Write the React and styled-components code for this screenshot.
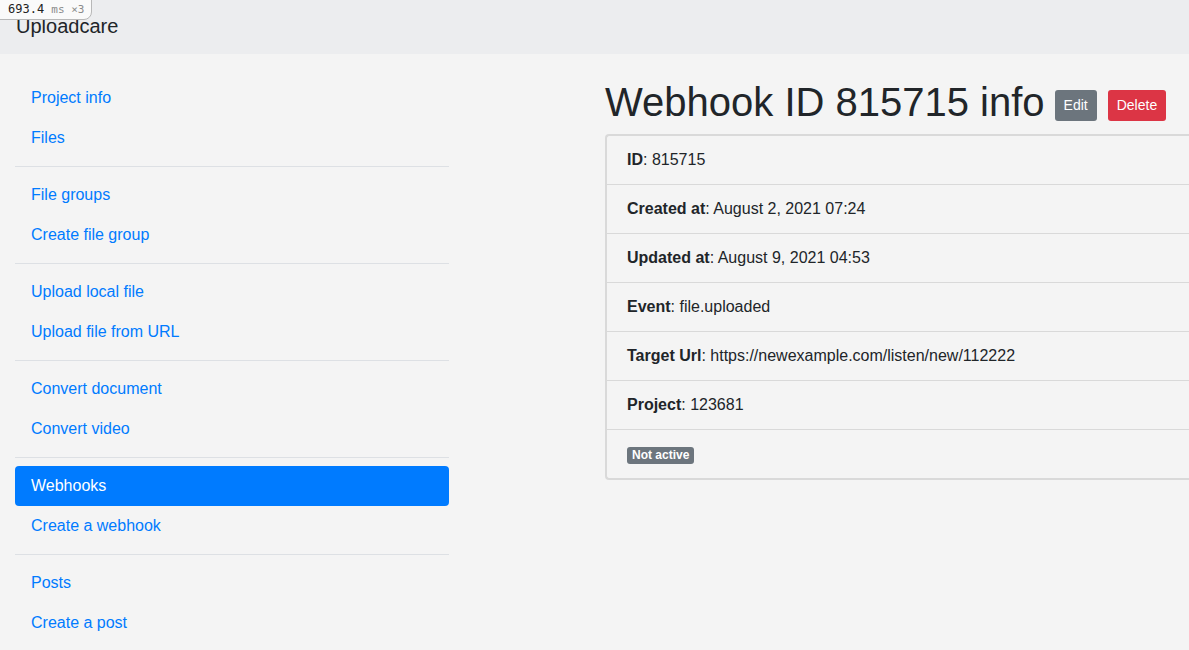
import React from 'react';
import styled, { createGlobalStyle } from 'styled-components';

const GlobalStyle = createGlobalStyle`
  html, body {
    margin: 0;
    padding: 0;
    background: #f4f4f4;
    font-family: "Liberation Sans", Arial, sans-serif;
    color: #212529;
    overflow: hidden;
  }
  * { box-sizing: border-box; }
`;

const Timer = styled.div`
  position: absolute;
  top: -1px;
  left: -1px;
  z-index: 10;
  padding: 1px 7px 1px 8px;
  background: #fafafa;
  border: 1px solid #b8b8b8;
  border-bottom-right-radius: 8px;
  font-family: "DejaVu Sans Mono", monospace;
  font-size: 12px;
  line-height: 16px;
  color: #222;
`;

const TimerUnit = styled.span`
  color: #8a8a8a;
  font-size: 11px;
`;

const Header = styled.header`
  height: 54px;
  background: #ecedef;
  display: flex;
  align-items: center;
  padding: 0 16px 2px;
  font-size: 20px;
  color: #212529;
`;

const Layout = styled.div`
  display: flex;
  padding: 24px 15px 0;
  gap: 156px;
  width: 1300px;
`;

const Sidebar = styled.nav`
  width: 434px;
  flex-shrink: 0;
  display: flex;
  flex-direction: column;
`;

const NavLink = styled.a`
  display: block;
  padding: 8px 16px;
  font-size: 16px;
  line-height: 24px;
  border-radius: 4px;
  text-decoration: none;
  color: ${(p) => (p.$active ? '#fff' : '#007bff')};
  background: ${(p) => (p.$active ? '#007bff' : 'transparent')};
`;

const Divider = styled.hr`
  margin: 8px 0;
  border: 0;
  border-top: 1px solid #dde0e4;
`;

const Main = styled.main`
  flex: 1;
`;

const TitleRow = styled.div`
  display: flex;
  align-items: center;
  gap: 11px;
  margin-bottom: 8px;
`;

const Title = styled.h1`
  margin: 0 -1px 0 0;
  font-size: 40px;
  font-weight: 400;
  line-height: 48px;
`;

const Button = styled.button`
  border: 0;
  border-radius: 3px;
  padding: 4px 9px;
  font-family: inherit;
  font-size: 14px;
  line-height: 23px;
  color: #fff;
  background: ${(p) => (p.$variant === 'danger' ? '#dc3545' : '#6c757d')};
  margin-top: 6px;
`;

const Card = styled.ul`
  list-style: none;
  margin: 0;
  padding: 0;
  border: 2px solid #d9d9d9;
  border-right: 0;
  border-radius: 4px 0 0 4px;
  width: 700px;
`;

const Row = styled.li`
  padding: 12px 20px;
  font-size: 16px;
  line-height: 24px;
  & + & { border-top: 1px solid #d9d9d9; }
`;

const Label = styled.b`
  font-weight: 700;
`;

const Badge = styled.span`
  display: inline-block;
  background: #6c757d;
  color: #fff;
  font-size: 12px;
  font-weight: 700;
  line-height: 13px;
  padding: 2px 5px 2px;
  border-radius: 3px;
`;

const groups = [
  ['Project info', 'Files'],
  ['File groups', 'Create file group'],
  ['Upload local file', 'Upload file from URL'],
  ['Convert document', 'Convert video'],
  ['Webhooks', 'Create a webhook'],
  ['Posts', 'Create a post'],
];

const fields = [
  ['ID', '815715'],
  ['Created at', 'August 2, 2021 07:24'],
  ['Updated at', 'August 9, 2021 04:53'],
  ['Event', 'file.uploaded'],
  ['Target Url', 'https://newexample.com/listen/new/112222'],
  ['Project', '123681'],
];

export default function App() {
  return (
    <>
      <GlobalStyle />
      <Timer>
        693.4 <TimerUnit>ms ×3</TimerUnit>
      </Timer>
      <Header>Uploadcare</Header>
      <Layout>
        <Sidebar>
          {groups.map((g, i) => (
            <React.Fragment key={i}>
              {i > 0 && <Divider />}
              {g.map((item) => (
                <NavLink key={item} href="#" $active={item === 'Webhooks'}>
                  {item}
                </NavLink>
              ))}
            </React.Fragment>
          ))}
        </Sidebar>
        <Main>
          <TitleRow>
            <Title>Webhook ID 815715 info</Title>
            <Button>Edit</Button>
            <Button $variant="danger">Delete</Button>
          </TitleRow>
          <Card>
            {fields.map(([k, v]) => (
              <Row key={k}>
                <Label>{k}</Label>: {v}
              </Row>
            ))}
            <Row>
              <Badge>Not active</Badge>
            </Row>
          </Card>
        </Main>
      </Layout>
    </>
  );
}
